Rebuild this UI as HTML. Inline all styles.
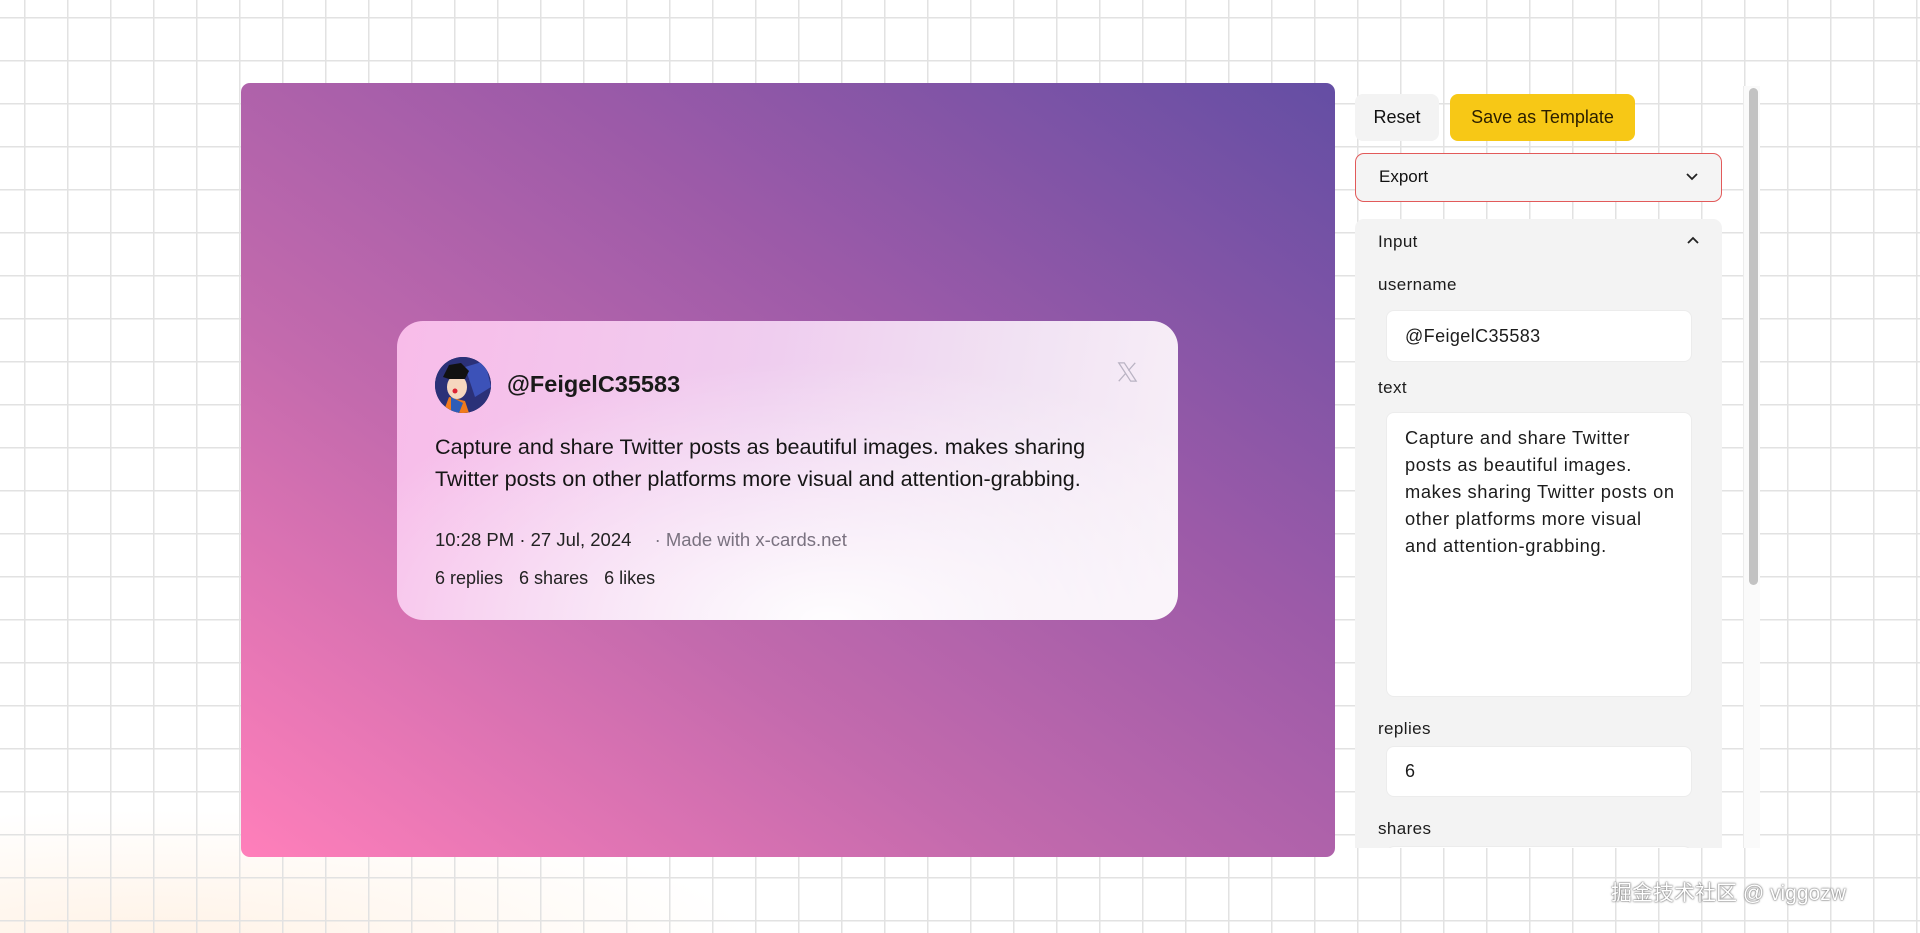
<!DOCTYPE html>
<html><head><meta charset="utf-8"><style>
*{box-sizing:border-box;margin:0;padding:0}
body{width:1920px;height:933px;overflow:hidden;position:relative;font-family:"Liberation Sans",sans-serif;color:#111;background:#fff}
.grid{position:absolute;inset:0;background-image:linear-gradient(to right,#e2e2e2 0 1.5px,transparent 1.5px),linear-gradient(to bottom,#e2e2e2 0 1.5px,transparent 1.5px);background-size:43px 43px;background-position:24px 17px}
.glow{position:absolute;left:0;top:780px;width:900px;height:153px;background:radial-gradient(ellipse 600px 130px at 150px 160px,rgba(255,232,210,0.55),rgba(255,255,255,0));}
.panel{position:absolute;left:241px;top:83px;width:1094px;height:774px;border-radius:9px;background:linear-gradient(to top right,#ff7fba 0%,#c36aad 35%,#9b5aa8 65%,#644ea4 100%)}
.card{position:absolute;left:397px;top:321px;width:781px;height:299px;border-radius:26px;overflow:hidden;
background:radial-gradient(ellipse 520px 260px at 430px 300px,rgba(255,255,255,0.95),rgba(255,255,255,0) 100%),linear-gradient(100deg,#f8bce9 0%,#efcdef 45%,#f1e2f3 75%,#f8f0f8 100%)}
.av{position:absolute;left:38px;top:36px;width:56px;height:56px;border-radius:50%;overflow:hidden;background:#2a2f6e}
.uname{position:absolute;left:110px;top:50px;font-size:23.5px;font-weight:bold;color:#1a1a1a}
.body{position:absolute;left:38px;top:110px;font-size:21.6px;line-height:32px;color:#161616;width:680px}
.meta{position:absolute;left:38px;top:208px;font-size:18.5px;color:#222}
.meta span{color:#7a7280;margin-left:18px}
.stats{position:absolute;left:38px;top:247px;font-size:18px;color:#222}
.stats b{font-weight:normal;margin-right:16px}
.btn{position:absolute;top:94px;height:47px;border-radius:8px;font-size:18px;line-height:47px;text-align:center}
.side{position:absolute;left:1355px;top:219px;width:367px;height:629px;background:#f3f3f3;border-radius:9px 9px 0 0;overflow:hidden;letter-spacing:0.4px}
.lbl{position:absolute;left:23px;font-size:17px;color:#1c1c1c}
.inp{position:absolute;left:31px;width:306px;background:#fff;border-radius:8px;border:1px solid #ececec;font-size:17px;color:#1c1c1c;padding-left:18px}
</style></head><body>
<div class="glow"></div>
<div class="grid"></div>
<div class="panel"></div>
<div class="card">
 <div class="av"><svg width="56" height="56" viewBox="0 0 56 56"><rect width="56" height="56" fill="#2b3178"/><path d="M30 10 L50 4 L56 30 L40 40Z" fill="#3c52b8"/><path d="M8 56 L14 40 L30 44 L34 56Z" fill="#f07a1c"/><path d="M16 40 L28 46 L24 56 L16 56Z" fill="#2d5db8"/><ellipse cx="22" cy="30" rx="10" ry="12" fill="#f6d7bf"/><path d="M8 20 L14 8 L26 6 L34 14 L30 22 L14 22Z" fill="#111"/><circle cx="20" cy="34" r="2.5" fill="#d23"/></svg></div>
 <div class="uname">@FeigelC35583</div>
 <svg style="position:absolute;left:719px;top:40px" width="22" height="22" viewBox="0 0 24 24"><path d="M3 2h6l13 20h-6z M21 2 L13.5 10.5 M3 22 L10.5 13.5" fill="none" stroke="#b9b3c3" stroke-width="1.4"/></svg>
 <div class="body">Capture and share Twitter posts as beautiful images. makes sharing Twitter posts on other platforms more visual and attention-grabbing.</div>
 <div class="meta">10:28 PM · 27 Jul, 2024 <span>· Made with x-cards.net</span></div>
 <div class="stats"><b>6 replies</b><b>6 shares</b><b>6 likes</b></div>
</div>
<div class="btn" style="left:1355px;width:84px;background:#f3f3f3">Reset</div>
<div class="btn" style="left:1450px;width:185px;background:#f7c816;color:#2a1e00">Save as Template</div>
<div style="position:absolute;left:1355px;top:153px;width:367px;height:49px;border:1.5px solid #e25a5a;border-radius:9px;background:#f4f4f4;font-size:17px;line-height:46px;padding-left:23px">Export
<svg style="position:absolute;right:22px;top:17px" width="14" height="10" viewBox="0 0 14 10"><path d="M2 3l5 5 5-5" fill="none" stroke="#222" stroke-width="1.8"/></svg></div>
<div class="side">
 <div class="lbl" style="top:13px">Input</div>
 <svg style="position:absolute;right:22px;top:17px" width="14" height="10" viewBox="0 0 14 10"><path d="M2 7l5-5 5 5" fill="none" stroke="#222" stroke-width="1.8"/></svg>
 <div class="lbl" style="top:56px">username</div>
 <div class="inp" style="top:91px;height:52px;line-height:50px;font-size:18px">@FeigelC35583</div>
 <div class="lbl" style="top:159px">text</div>
 <div class="inp" style="top:193px;height:285px;padding-top:11px;line-height:27px;padding-right:12px;font-size:18.3px;letter-spacing:0.6px">Capture and share Twitter posts as beautiful images. makes sharing Twitter posts on other platforms more visual and attention-grabbing.</div>
 <div class="lbl" style="top:500px">replies</div>
 <div class="inp" style="top:527px;height:51px;line-height:49px;font-size:18px">6</div>
 <div class="lbl" style="top:600px">shares</div>
 <div class="inp" style="top:627px;height:51px"></div>
</div>
<div style="position:absolute;left:1743px;top:86px;width:17px;height:762px;background:#fafafa;border-left:1px solid #ececec"></div>
<div style="position:absolute;left:1749px;top:88px;width:9px;height:497px;background:#c2c2c2;border-radius:5px"></div>
<div style="position:absolute;left:1611px;top:877px;font-size:21px;color:#fff;font-family:'Liberation Sans','Noto Sans CJK SC',sans-serif;text-shadow:0 0 2px #666,0 0 1px #555">掘金技术社区 @ viggozw</div>
</body></html>
